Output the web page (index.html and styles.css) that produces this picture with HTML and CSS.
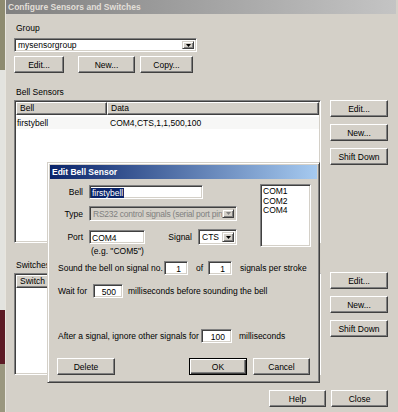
FILE: index.html
```html
<!DOCTYPE html>
<html>
<head>
<meta charset="utf-8">
<title>Configure Sensors and Switches</title>
<link rel="stylesheet" href="styles.css">
</head>
<body>
<div class="desktop"><div class="d1"></div><div class="d2"></div><div class="d3"></div><div class="d4"></div></div>
<div class="window">
  <div class="titlebar inactive">Configure Sensors and Switches</div>
  <div class="content">
    <div class="label lbl-group">Group</div>
    <div class="combo group-combo">
      <span class="combo-text">mysensorgroup</span>
      <span class="drop"><svg width="5" height="3" viewBox="0 0 5 3"><polygon points="0,0 5,0 2.5,3" fill="#000"/></svg></span>
    </div>
    <div class="btnrow top-btns">
      <button class="btn b-edit">Edit...</button>
      <button class="btn b-new">New...</button>
      <button class="btn b-copy">Copy...</button>
    </div>
    <div class="label lbl-bell">Bell Sensors</div>
    <div class="row bell-row">
      <div class="listview bell-list">
        <div class="lv-header"><div class="col c1">Bell</div><div class="col c2">Data</div></div>
        <div class="lv-row"><div class="cell c1">firstybell</div><div class="cell c2">COM4,CTS,1,1,500,100</div></div>
      </div>
      <div class="sidebtns">
        <button class="btn side">Edit...</button>
        <button class="btn side">New...</button>
        <button class="btn side">Shift Down</button>
      </div>
    </div>
    <div class="label lbl-switch">Switches</div>
    <div class="row switch-row">
      <div class="listview switch-list">
        <div class="lv-header"><div class="col c1">Switch</div><div class="col c2"></div></div>
      </div>
      <div class="sidebtns">
        <button class="btn side">Edit...</button>
        <button class="btn side">New...</button>
        <button class="btn side">Shift Down</button>
      </div>
    </div>
    <div class="bottom-btns">
      <button class="btn bb">Help</button>
      <button class="btn bb">Close</button>
    </div>
  </div>

  <div class="dialog">
    <div class="titlebar active">Edit Bell Sensor</div>
    <div class="dlg-body">
      <div class="dlg-top">
        <div class="form">
          <div class="frow r-bell"><span class="flabel">Bell</span><div class="field bell-field"><span class="sel">firstybell</span></div></div>
          <div class="frow r-type"><span class="flabel">Type</span>
            <div class="combo disabled type-combo">
              <span class="combo-text">RS232 control signals (serial port pins)</span>
              <span class="drop"><svg width="5" height="3" viewBox="0 0 5 3"><polygon points="0,0 5,0 2.5,3" fill="#808080"/></svg></span>
            </div>
          </div>
          <div class="frow r-port"><span class="flabel">Port</span><div class="field port-field">COM4</div>
            <span class="siglabel">Signal</span>
            <div class="combo sig-combo">
              <span class="combo-text">CTS</span>
              <span class="drop"><svg width="5" height="3" viewBox="0 0 5 3"><polygon points="0,0 5,0 2.5,3" fill="#000"/></svg></span>
            </div>
          </div>
          <div class="hint">(e.g. "COM5")</div>
        </div>
        <div class="listbox com-list"><div>COM1</div><div>COM2</div><div>COM4</div></div>
      </div>
      <div class="line l-sound"><span class="t1">Sound the bell on signal no.</span><div class="field num f-sig">1</div><span class="t-of">of</span><div class="field num f-of">1</div><span class="t-end">signals per stroke</span></div>
      <div class="line l-wait"><span class="t1">Wait for</span><div class="field num f-wait">500</div><span class="t-end">milliseconds before sounding the bell</span></div>
      <div class="line l-after"><span class="t1">After a signal, ignore other signals for</span><div class="field num f-after">100</div><span class="t-end">milliseconds</span></div>
      <div class="dlg-btns">
        <button class="btn db b-delete">Delete</button>
        <button class="btn db default b-ok">OK</button>
        <button class="btn db b-cancel">Cancel</button>
      </div>
    </div>
  </div>
</div>
</body>
</html>
```
FILE: styles.css
```css
* { box-sizing: border-box; }
html, body { margin: 0; padding: 0; }
body {
  width: 398px; height: 412px; overflow: hidden;
  display: flex;
  font-family: "Liberation Sans", Arial, sans-serif;
  font-size: 8.5px;
  color: #000;
  background: #d4d0c8;
}
.desktop { width: 5px; display: flex; flex-direction: column; }
.d1 { height: 70px; background: #8e8b70; }
.d2 { height: 240px; background: #e3e3df; }
.d3 { height: 54px; background: #5c1a24; }
.d4 { flex: 1; background: #9a977f; }

.window {
  flex: 1; position: relative;
  background: #d4d0c8;
  border-left: 1px solid #e8e5de;
  display: flex; flex-direction: column;
}
.titlebar {
  height: 14px; line-height: 14px;
  font-weight: bold; padding-left: 2px;
  white-space: nowrap; overflow: hidden;
}
.inactive { background: linear-gradient(to right, #808080, #c4c4c4); color: #e2dfd8; margin-right: 2px; }
.active { background: linear-gradient(to right, #0a246a, #a6caf0); color: #fff; }

.content { padding: 9px 2px 0 8px; display: flex; flex-direction: column; align-items: flex-start; }
.label { height: 11px; line-height: 11px; padding-left: 2px; }

/* sunken look */
.combo, .field, .listview, .listbox {
  background: #fff;
  border: 1px solid; border-color: #808080 #fff #fff #808080;
  box-shadow: inset 1px 1px #404040, inset -1px -1px #d4d0c8;
}
.combo { display: flex; align-items: stretch; padding: 2px; }
.combo-text {
  flex: 1; min-width: 0;
  line-height: 9px; padding-left: 1px;
  white-space: nowrap;
  overflow-x: clip; overflow-y: visible;
}
.drop {
  width: 12px; flex: none;
  background: #d4d0c8;
  border: 1px solid; border-color: #d4d0c8 #404040 #404040 #d4d0c8;
  box-shadow: inset 1px 1px #fff, inset -1px -1px #808080;
  display: flex; align-items: center; justify-content: center;
}
.group-combo { width: 183px; height: 14px; margin-top: 4px; }

.btn {
  font: inherit; color: #000;
  height: 17px; padding: 0; margin: 0;
  background: #d4d0c8;
  border: 1px solid; border-color: #fff #404040 #404040 #fff;
  box-shadow: inset -1px -1px #808080;
}
.btn.default {
  border-color: #000;
  box-shadow: inset 1px 1px #fff, inset -1px -1px #404040, inset -2px -2px #808080;
}
.btnrow { display: flex; margin-top: 4px; }
.b-edit { width: 50px; }
.b-new { width: 57px; margin-left: 14px; }
.b-copy { width: 53px; margin-left: 5px; }

.lbl-bell { margin-top: 14px; }
.row { display: flex; align-items: flex-start; gap: 9px; }
.bell-row { margin-top: 2px; }
.listview { width: 307px; padding: 1px; }
.bell-list { height: 143px; }
.lv-header { display: flex; height: 13px; }
.col {
  background: #d4d0c8;
  border: 1px solid; border-color: #fff #404040 #404040 #fff;
  box-shadow: inset -1px -1px #808080;
  line-height: 11px; padding-left: 3px;
}
.col.c1 { width: 91px; }
.col.c2 { flex: 1; }
.lv-row { display: flex; height: 12px; line-height: 12px; margin-top: 2px; background: #f7f7f6; }
.cell.c1 { width: 91px; padding-left: 1px; }
.cell.c2 { padding-left: 3px; }

.sidebtns { display: flex; flex-direction: column; gap: 7px; }
.side { width: 58px; }

.lbl-switch { margin-top: 17px; }
.switch-row { margin-top: 1px; }
.switch-list { height: 102px; margin-top: 1px; }

.bottom-btns { align-self: stretch; display: flex; justify-content: flex-end; gap: 5px; margin-top: 15px; padding-right: 8px; }
.bb { width: 57px; }

/* Edit Bell Sensor dialog */
.dialog {
  position: absolute; left: 41px; top: 162px;
  width: 273px; height: 221px;
  background: #d4d0c8;
  border: 1px solid; border-color: #d4d0c8 #404040 #404040 #d4d0c8;
  box-shadow: inset 1px 1px #fff, inset -1px -1px #808080;
  padding: 2px;
  display: flex; flex-direction: column;
}
.dlg-body { padding: 5px 6px 0 8px; display: flex; flex-direction: column; }
.dlg-top { display: flex; align-items: flex-start; }
.form { width: 179px; margin-top: 1px; display: flex; flex-direction: column; }
.frow { display: flex; align-items: center; }
.flabel { width: 25px; text-align: right; margin-right: 6px; }
.field { height: 14px; line-height: 10px; padding: 2px 2px; white-space: nowrap; overflow: hidden; }
.bell-field { width: 114px; padding-left: 1px; }
.sel { background: #0a246a; color: #fff; display: inline-block; padding: 0 1px; }
.r-type { margin-top: 7px; }
.type-combo { width: 148px; height: 15px; background: #d4d0c8; color: #808080; }
.type-combo .combo-text { letter-spacing: -0.25px; line-height: 10px; }
.r-port { margin-top: 8px; height: 16px; }
.port-field { width: 56px; }
.siglabel { width: 47px; text-align: right; margin-right: 6px; }
.sig-combo { width: 39px; height: 16px; }
.sig-combo .combo-text { line-height: 11px; }
.hint { margin-top: 1px; margin-left: 33px; height: 10px; line-height: 10px; }
.com-list { width: 51px; height: 63px; margin-left: 23px; padding: 2px 2px; line-height: 9.5px; }

.line { display: flex; align-items: center; height: 14px; white-space: nowrap; }
.l-sound { margin-top: 5px; }
.l-wait { margin-top: 9px; }
.l-after { margin-top: 31px; }
.num { text-align: right; padding-right: 6px; }
.l-sound .t1 { width: 106px; }
.f-sig, .f-of { width: 24px; }
.t-of { width: 20px; padding-left: 8px; }
.l-sound .t-end { margin-left: 8px; }
.l-wait .t1 { width: 35px; }
.f-wait { width: 30px; }
.l-wait .t-end { margin-left: 5px; }
.l-after .t1 { width: 143px; }
.f-after { width: 31px; }
.l-after .t-end { margin-left: 7px; }

.dlg-btns { display: flex; margin-top: 15px; }
.db { width: 58px; }
.b-delete { margin-left: -1px; }
.b-ok { margin-left: 74px; }
.b-cancel { width: 57px; margin-left: 6px; }
```
